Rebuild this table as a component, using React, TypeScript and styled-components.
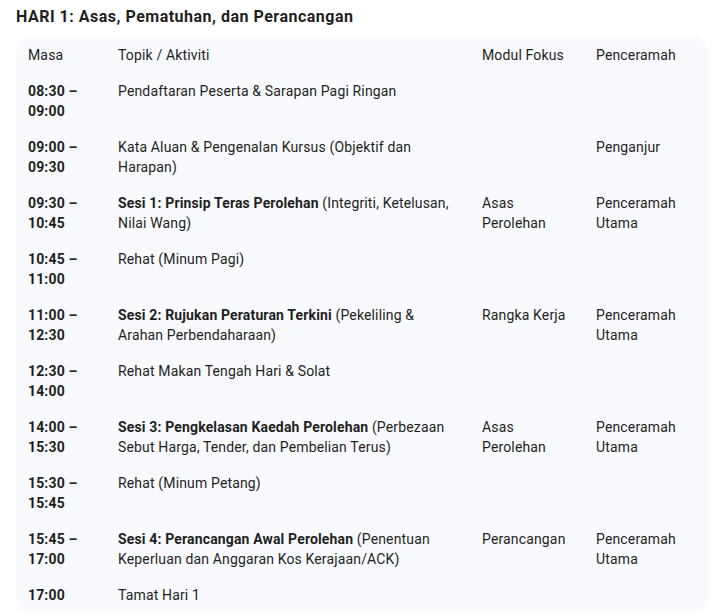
import React from "react";
import styled, { createGlobalStyle } from "styled-components";

const GlobalStyle = createGlobalStyle`
  body {
    margin: 0;
    background: #ffffff;
    font-family: Roboto, "Noto Sans", Arial, sans-serif;
    color: #1f1f1f;
  }
`;

const Page = styled.div`
  padding: 7px 7px 0 16px;
`;

const Heading = styled.h3`
  margin: 0 0 10px;
  font-size: 16px;
  line-height: 20px;
  font-weight: 700;
  letter-spacing: 0.5px;
`;

const Table = styled.div`
  display: grid;
  grid-template-columns: 90px 364px 114px 124px;
  background: #f8fafd;
  border-radius: 16px;
`;

const Cell = styled.div<{ $time?: boolean }>`
  padding: 8px 12px;
  font-size: 14px;
  line-height: 20px;
  letter-spacing: 0.15px;
  font-weight: ${(p) => (p.$time ? 700 : 400)};
`;

const HeadCell = styled(Cell)`
  color: #1f1f1f;
`;

const Strong = styled.b`
  font-weight: 700;
`;

type Row = {
  time: string;
  title?: string;
  rest: string;
  modul?: string;
  speaker?: string;
};

const rows: Row[] = [
  { time: "08:30 – 09:00", rest: "Pendaftaran Peserta & Sarapan Pagi Ringan" },
  {
    time: "09:00 – 09:30",
    rest: "Kata Aluan & Pengenalan Kursus (Objektif dan Harapan)",
    speaker: "Penganjur",
  },
  {
    time: "09:30 – 10:45",
    title: "Sesi 1: Prinsip Teras Perolehan",
    rest: " (Integriti, Ketelusan, Nilai Wang)",
    modul: "Asas Perolehan",
    speaker: "Penceramah Utama",
  },
  { time: "10:45 – 11:00", rest: "Rehat (Minum Pagi)" },
  {
    time: "11:00 – 12:30",
    title: "Sesi 2: Rujukan Peraturan Terkini",
    rest: " (Pekeliling & Arahan Perbendaharaan)",
    modul: "Rangka Kerja",
    speaker: "Penceramah Utama",
  },
  { time: "12:30 – 14:00", rest: "Rehat Makan Tengah Hari & Solat" },
  {
    time: "14:00 – 15:30",
    title: "Sesi 3: Pengkelasan Kaedah Perolehan",
    rest: " (Perbezaan Sebut Harga, Tender, dan Pembelian Terus)",
    modul: "Asas Perolehan",
    speaker: "Penceramah Utama",
  },
  { time: "15:30 – 15:45", rest: "Rehat (Minum Petang)" },
  {
    time: "15:45 – 17:00",
    title: "Sesi 4: Perancangan Awal Perolehan",
    rest: " (Penentuan Keperluan dan Anggaran Kos Kerajaan/ACK)",
    modul: "Perancangan",
    speaker: "Penceramah Utama",
  },
  { time: "17:00", rest: "Tamat Hari 1" },
];

export default function App() {
  return (
    <>
      <GlobalStyle />
      <Page>
        <Heading>HARI 1: Asas, Pematuhan, dan Perancangan</Heading>
        <Table>
          <HeadCell>Masa</HeadCell>
          <HeadCell>Topik / Aktiviti</HeadCell>
          <HeadCell>Modul Fokus</HeadCell>
          <HeadCell>Penceramah</HeadCell>
          {rows.map((r) => (
            <React.Fragment key={r.time}>
              <Cell $time>{r.time}</Cell>
              <Cell>
                {r.title && <Strong>{r.title}</Strong>}
                {r.rest}
              </Cell>
              <Cell>{r.modul}</Cell>
              <Cell>{r.speaker}</Cell>
            </React.Fragment>
          ))}
        </Table>
      </Page>
    </>
  );
}
